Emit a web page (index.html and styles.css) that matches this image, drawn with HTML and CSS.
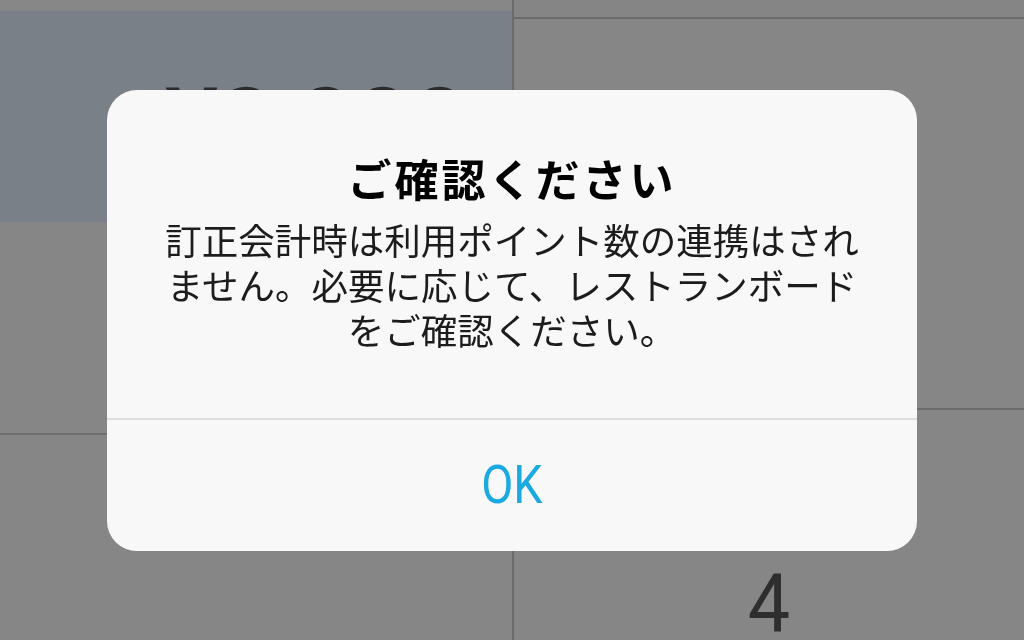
FILE: index.html
```html
<!doctype html>
<html>
<head>
<meta charset="utf-8">
<title>ご確認ください</title>
<link rel="stylesheet" href="styles.css">
</head>
<body>
<div class="screen">
    <div class="colLeft">
        <div class="strip"></div>
        <div class="amountPanel"><span class="amount">¥3,000</span></div>
        <div class="cell cellMid"></div>
        <div class="cell"></div>
    </div>
    <div class="colRight">
        <div class="stripR"></div>
        <div class="key keyTop"></div>
        <div class="key keyBottom"><span class="keyNum">4</span></div>
    </div>
</div>

<div class="overlay">
    <div class="alert">
        <div class="alertBody">
            <h1 class="alertTitle">ご確認ください</h1>
            <p class="alertMsg">訂正会計時は利用ポイント数の連携はされません。必要に応じて、レストランボードをご確認ください。</p>
        </div>
        <a class="alertBtn" href="javascript:;"><span>OK</span></a>
    </div>
</div>
</body>
</html>
```

FILE: styles.css
```css
*{ margin:0; padding:0; box-sizing:border-box;}
a{ text-decoration:none;}
html,body{ width:1024px; height:640px; overflow:hidden;}
body{ background:#868686; font-family:Roboto, "Noto Sans CJK JP", sans-serif;}

.screen{ display:flex; width:1024px; height:640px; overflow:hidden;}
.colLeft{ width:514px; border-right:2px solid #6b6b6b; display:flex; flex-direction:column;}
.colLeft > div{ flex:none;}
.colLeft .strip{ height:11px; background:#878787;}
.colLeft .amountPanel{ height:211px; background:#7a8087; padding:64px 0 0 165px;}
.colLeft .amount{ display:block; font-size:100px; line-height:100px; font-weight:500; color:#2a2a2a; white-space:nowrap;}
.colLeft .cellMid{ height:213px; border-bottom:2px solid #6f6f6f;}

.colRight{ flex:1; display:flex; flex-direction:column;}
.colRight > div{ flex:none;}
.colRight .stripR{ height:19px; border-bottom:2px solid #6b6b6b; background:#858585;}
.colRight .keyTop{ height:391px; border-bottom:2px solid #6b6b6b;}
.colRight .key{ display:flex; align-items:center; justify-content:center;}
.colRight .keyBottom{ height:388px;}
.colRight .keyNum{ display:inline-block; font-size:82px; line-height:82px; font-weight:400; color:#2e2e2e; transform:scaleX(0.92);}

/* alert */
.overlay{ position:fixed; left:0; top:0; width:1024px; height:640px; display:flex; align-items:center; justify-content:center;}
.alert{ width:810px; height:461px; background:#f8f8f8; border-radius:30px; display:flex; flex-direction:column; overflow:hidden;}
.alertBody{ height:328px; padding:64px 50px 0; text-align:center; font-family:"Noto Sans CJK JP", sans-serif;}
.alertTitle{ font-size:44px; line-height:48px; font-weight:700; color:#000; letter-spacing:3px; margin-bottom:15px;}
.alertMsg{ font-size:36.5px; line-height:45px; color:#1c1c1c;}
.alertBtn{ flex:1; display:flex; align-items:center; justify-content:center; border-top:2px solid #dedede;}
.alertBtn span{ display:inline-block; font-family:Roboto, sans-serif; font-size:53px; line-height:53px; color:#1ba9e1; transform:scaleX(0.88);}
```
